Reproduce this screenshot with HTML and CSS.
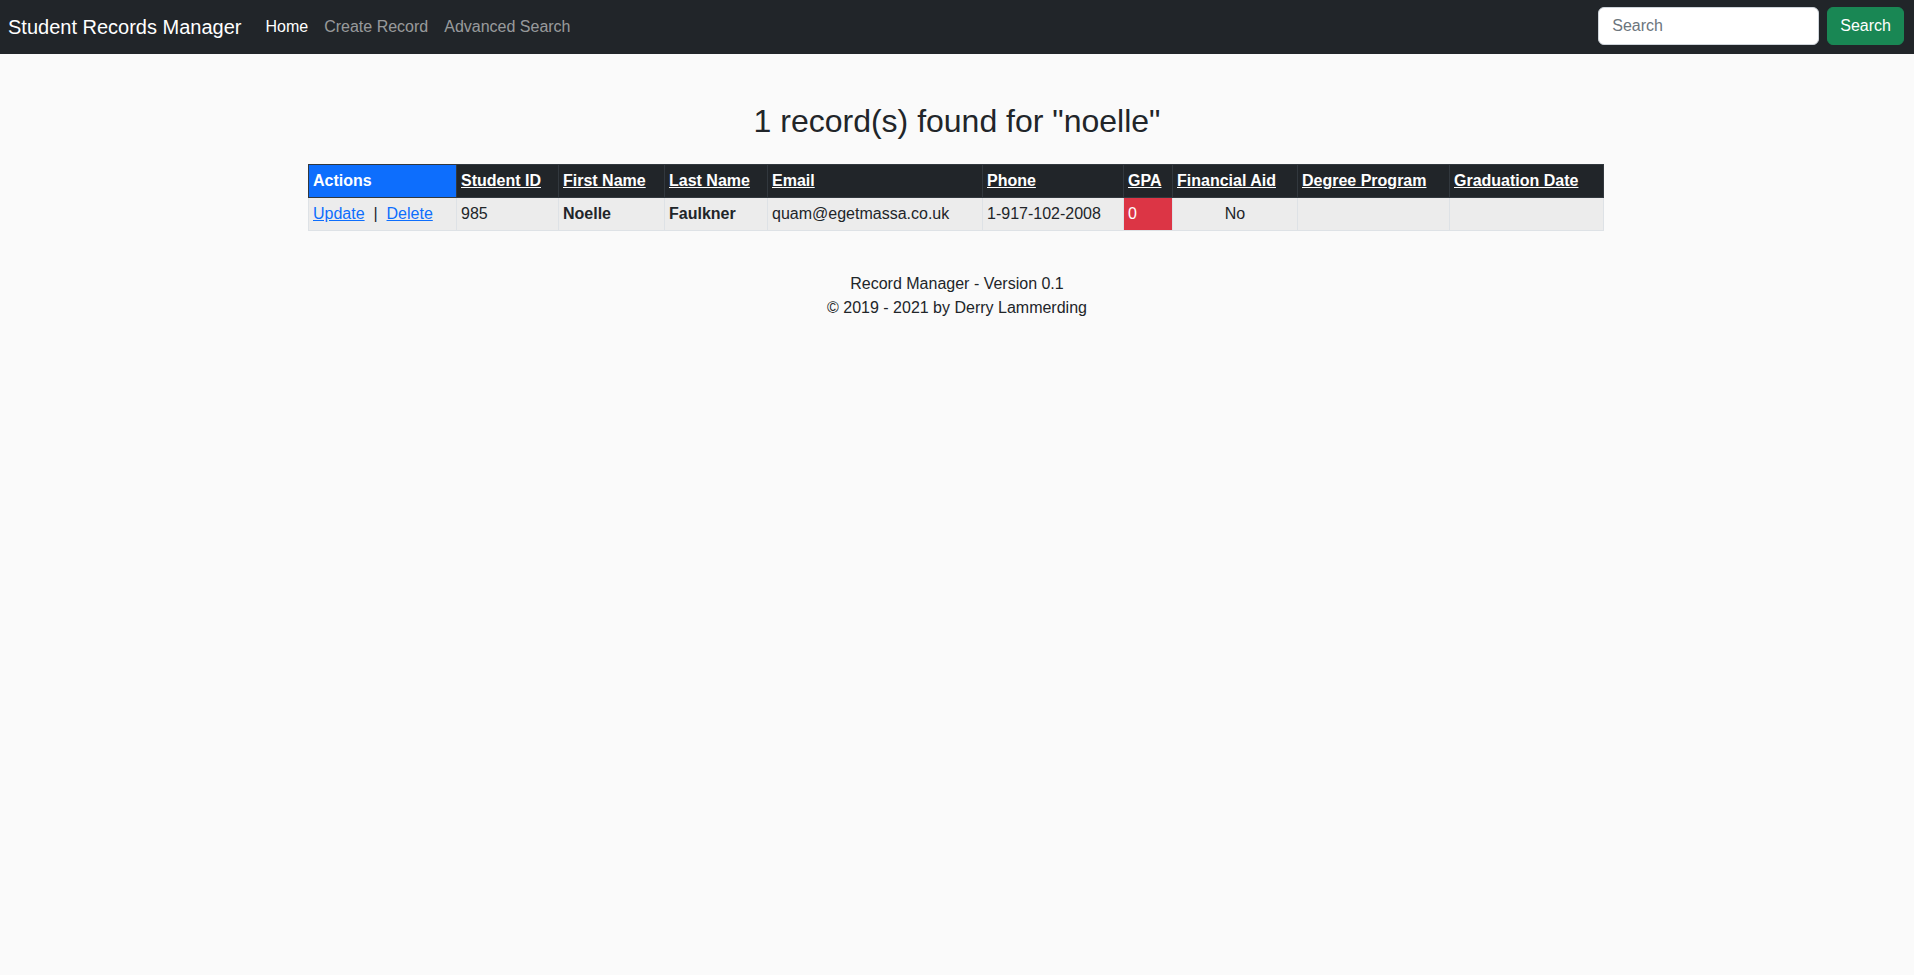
FILE: index.html
```html
<!DOCTYPE html>
<html lang="en">
<head>
<meta charset="utf-8">
<title>Student Records Manager</title>
<link rel="stylesheet" href="styles.css">
</head>
<body>
<nav class="navbar">
  <a class="brand" href="#">Student Records Manager</a>
  <ul class="nav">
    <li><a class="nav-link active" href="#">Home</a></li>
    <li><a class="nav-link" href="#">Create Record</a></li>
    <li><a class="nav-link" href="#">Advanced Search</a></li>
  </ul>
  <form class="search-form">
    <input class="search-input" type="search" placeholder="Search">
    <button class="btn-search" type="button">Search</button>
  </form>
</nav>
<main class="main">
  <h2 class="title">1 record(s) found for "noelle"</h2>
  <table class="records">
    <thead>
      <tr>
        <th class="th-actions c-actions">Actions</th>
        <th class="c-id"><a href="#">Student ID</a></th>
        <th class="c-first"><a href="#">First Name</a></th>
        <th class="c-last"><a href="#">Last Name</a></th>
        <th class="c-email"><a href="#">Email</a></th>
        <th class="c-phone"><a href="#">Phone</a></th>
        <th class="c-gpa"><a href="#">GPA</a></th>
        <th class="c-aid"><a href="#">Financial Aid</a></th>
        <th class="c-degree"><a href="#">Degree Program</a></th>
        <th class="c-grad"><a href="#">Graduation Date</a></th>
      </tr>
    </thead>
    <tbody>
      <tr>
        <td><a class="link" href="#">Update</a> &nbsp;|&nbsp; <a class="link" href="#">Delete</a></td>
        <td>985</td>
        <td class="bold">Noelle</td>
        <td class="bold">Faulkner</td>
        <td>quam@egetmassa.co.uk</td>
        <td>1-917-102-2008</td>
        <td class="gpa-low">0</td>
        <td class="center">No</td>
        <td></td>
        <td></td>
      </tr>
    </tbody>
  </table>
  <footer class="footer">
    <div>Record Manager - Version 0.1</div>
    <div>&copy; 2019 - 2021 by Derry Lammerding</div>
  </footer>
</main>
</body>
</html>
```

FILE: styles.css
```css
* { box-sizing: border-box; }
html, body { margin: 0; padding: 0; }
body {
  background: #fafafa;
  color: #212529;
  font-family: "Liberation Sans", Arial, sans-serif;
  font-size: 16px;
  line-height: 1.5;
}
a { color: inherit; }

.navbar {
  display: flex;
  align-items: center;
  height: 54px;
  padding: 0 10px 0 8px;
  background: #212529;
}
.brand {
  color: #fff;
  font-size: 20px;
  line-height: 30px;
  text-decoration: none;
  margin-right: 16px;
  white-space: nowrap;
}
.nav {
  display: flex;
  list-style: none;
  margin: 0;
  padding: 0;
  flex: 1;
}
.nav-link {
  display: block;
  padding: 8px 8px;
  color: rgba(255, 255, 255, 0.55);
  text-decoration: none;
}
.nav-link.active { color: #fff; }

.search-form {
  display: flex;
  gap: 8px;
  margin-top: -3px;
}
.search-input {
  width: 221px;
  height: 38px;
  padding: 6px 13px;
  border: 1px solid #ced4da;
  border-radius: 6px;
  background: #fff;
  font-family: inherit;
  font-size: 16px;
  color: #212529;
}
.search-input::placeholder { color: #6c757d; }
.btn-search {
  height: 38px;
  padding: 6px 12px;
  border: 1px solid #198754;
  border-radius: 6px;
  background: #198754;
  color: #fff;
  font-family: inherit;
  font-size: 16px;
}

.main {
  padding-top: 48px;
}
.title {
  margin: 0 0 24px;
  text-align: center;
  font-size: 32px;
  font-weight: 400;
  line-height: 1.2;
}

.records {
  width: 1295px;
  margin: 0 0 0 calc(50% - 649px);
  border-collapse: collapse;
  table-layout: fixed;
}
.records th,
.records td {
  padding: 4px 4px;
  text-align: left;
  vertical-align: top;
  white-space: nowrap;
  overflow: hidden;
}
.records th {
  background: #212529;
  color: #fff;
  font-weight: 700;
  border: 1px solid #32383e;
}
.records th a { color: #fff; text-decoration: underline; }
.records th.th-actions { background: #0d6efd; }
.records td {
  background: #ececec;
  border: 1px solid #dee2e6;
}

.c-actions { width: 148px; }
.c-id { width: 102px; }
.c-first { width: 106px; }
.c-last { width: 103px; }
.c-email { width: 215px; }
.c-phone { width: 141px; }
.c-gpa { width: 49px; }
.c-aid { width: 125px; }
.c-degree { width: 152px; }
.c-grad { width: 154px; }

.link { color: #0d6efd; text-decoration: underline; }
.bold { font-weight: 700; }
.center { text-align: center !important; }
.records td.gpa-low { background: #dc3545; color: #fff; }

.footer {
  margin-top: 41px;
  text-align: center;
}
```
